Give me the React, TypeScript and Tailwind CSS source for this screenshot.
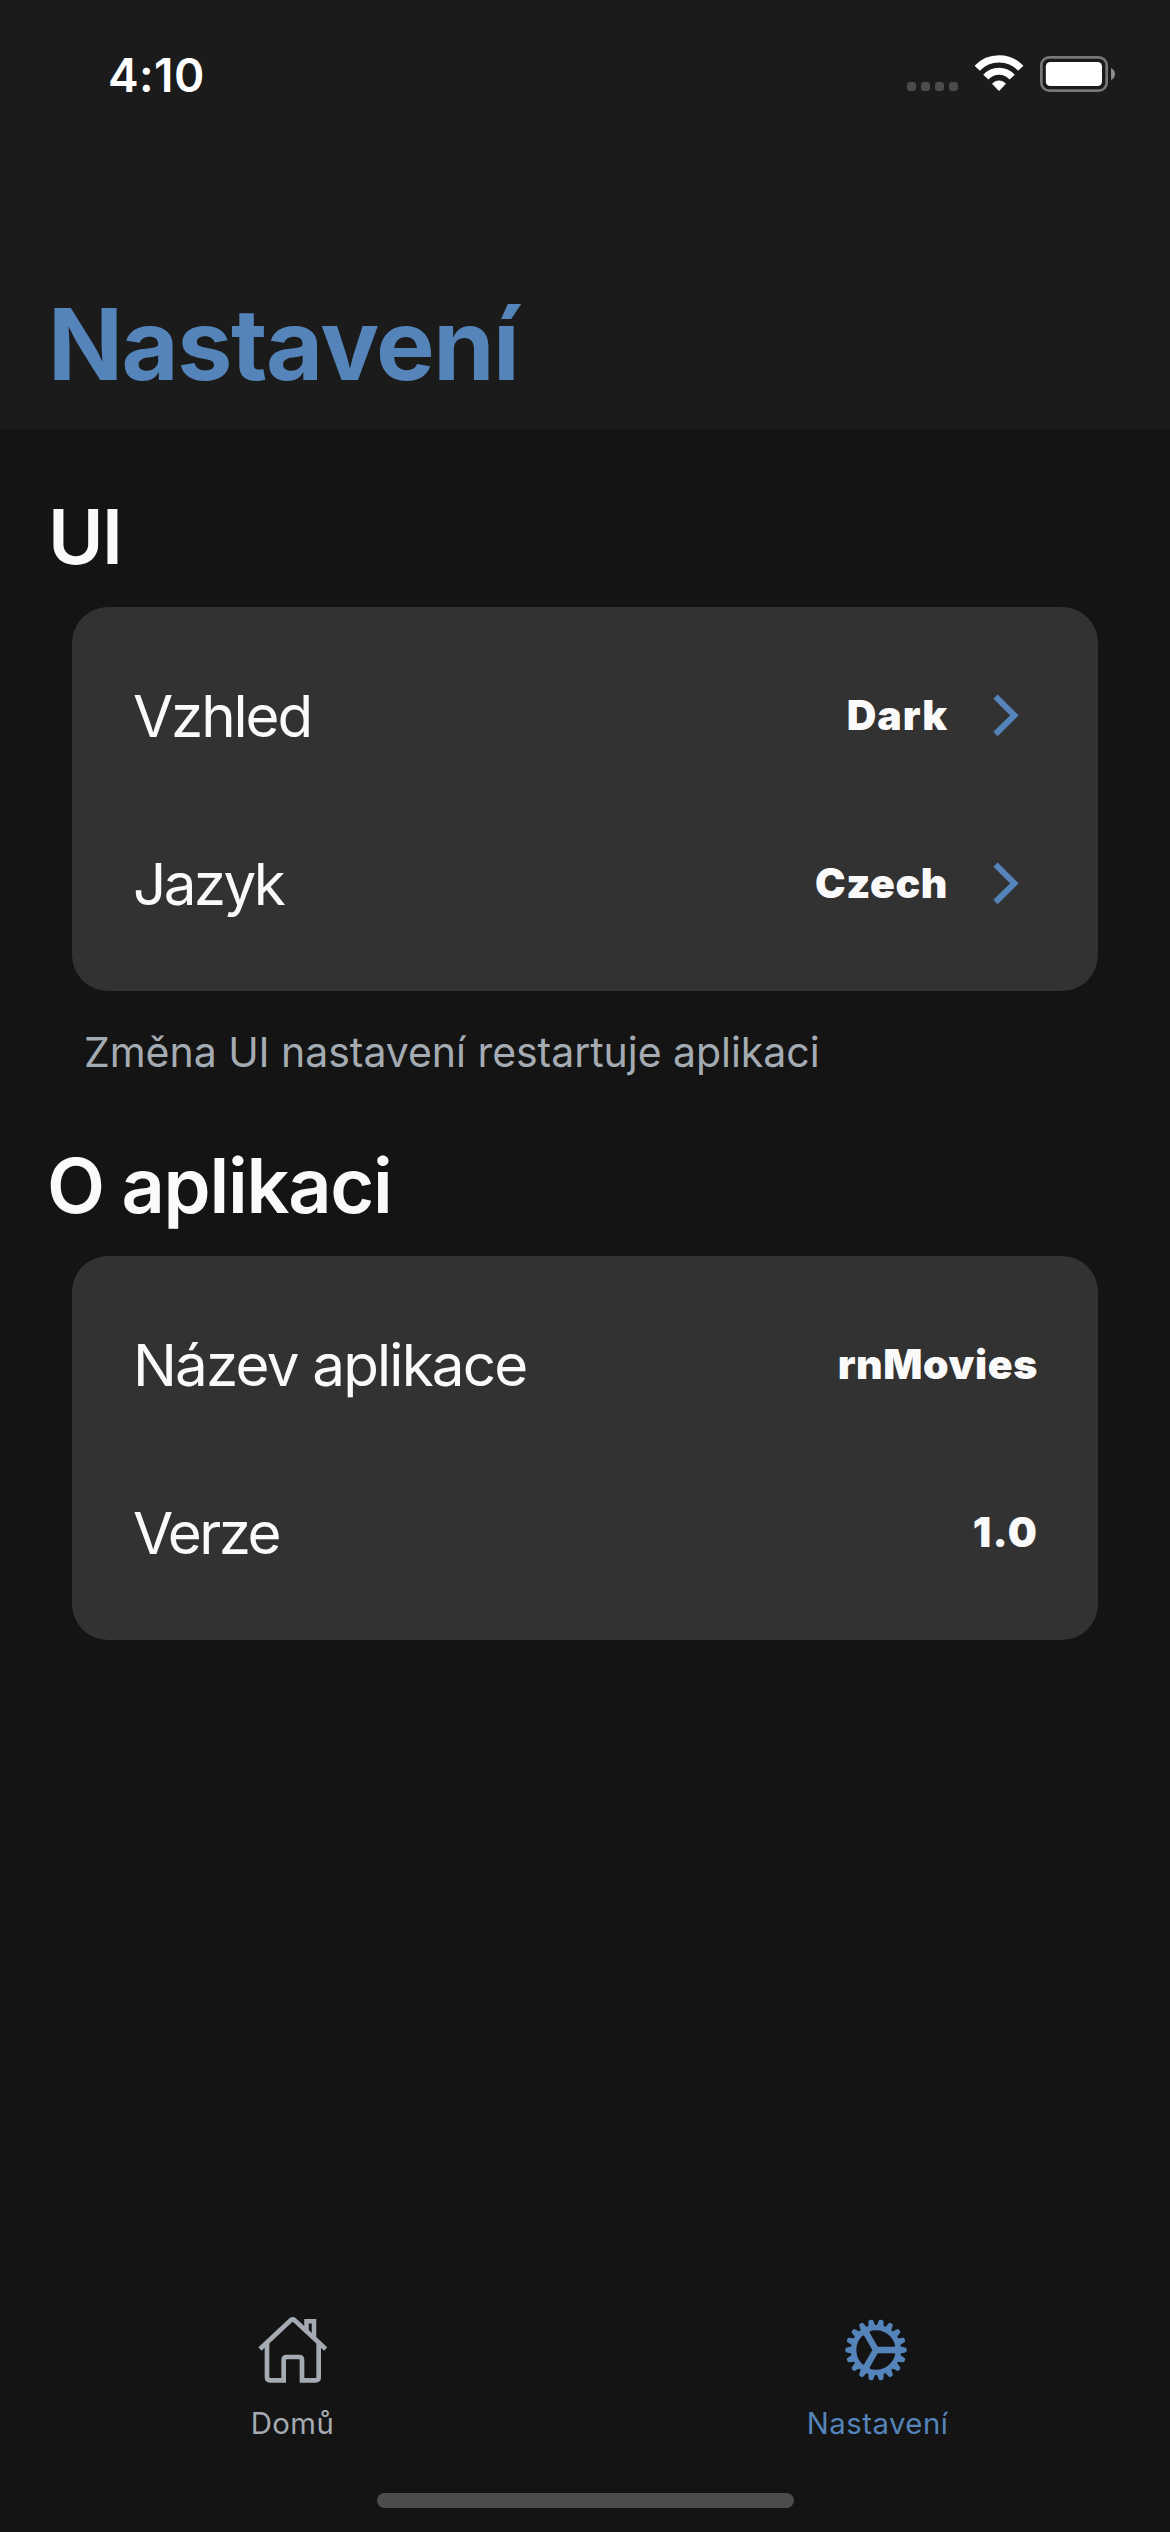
import type { ReactNode } from "react";

function WifiIcon() {
  return (
    <svg className="h-[38px] w-[50px]" viewBox="282 75 150 114" fill="none" stroke="#fff">
      <path d="M291.7 114.5A90 90 0 0 1 422.3 114.5" strokeWidth="22" />
      <path d="M317.5 141.3A53 53 0 0 1 396.5 141.3" strokeWidth="21" />
      <path
        d="M337 161Q345 152.500 357 152.500Q369 152.500 377 161L357 182Z"
        fill="#fff"
        strokeWidth="2"
        strokeLinejoin="round"
      />
    </svg>
  );
}

function BatteryIcon() {
  return (
    <svg className="h-[36px] w-[76px]" viewBox="480 78 228 108" fill="none">
      <rect x="484" y="82" width="196" height="100" rx="24" stroke="#777777" strokeWidth="8" />
      <rect x="497.500" y="96" width="168.500" height="72" rx="13" fill="#fff" />
      <path d="M693 114Q705 120 705 132T693 150Z" fill="#8b8b8b" />
    </svg>
  );
}

function ChevronIcon() {
  return (
    <svg className="h-[44px] w-[26px]" viewBox="639 309 78 132" fill="none" stroke="#5484ba">
      <path d="M646.500 320L703.300 376L646.500 432" strokeWidth="18" />
    </svg>
  );
}

function HomeIcon() {
  return (
    <svg className="h-[70px] w-[72px]" viewBox="110 75 216 210" fill="none" stroke="#a5abb3">
      <path d="M119 177L211 91Q217 86 223 91L316 177" strokeWidth="14" />
      <path
        d="M140 160V262Q140 271 149 271H190V210Q190 201 199 201H236Q245 201 245 210V271H286Q295 271 295 262V160"
        strokeWidth="14"
      />
      <path d="M258.500 124V94H281V146" strokeWidth="13.500" />
    </svg>
  );
}

const TEETH = Array.from({ length: 18 }, (_, i) => i * 20);
const SPOKES = [0, 120, 240];

function GearIcon() {
  return (
    <svg className="mr-[4px] h-[64px] w-[64px]" viewBox="-96 -96 192 192" fill="#5484ba">
      <circle r="67" fill="none" stroke="#5484ba" strokeWidth="16" />
      {TEETH.map((a) => (
        <path
          key={a}
          transform={`rotate(${a})`}
          d="M70 -12L77 -9.500L87 -7.500Q92 -6.500 92 -2V2Q92 6.500 87 7.500L77 9.500L70 12Z"
        />
      ))}
      {SPOKES.map((a) => (
        <path key={a} transform={`rotate(${a})`} d="M0 -9.500H54Q59 -9.500 58 -15L64 -12V12L58 15Q59 9.500 54 9.500H0Z" />
      ))}
    </svg>
  );
}

function Card({ children }: { children: ReactNode }) {
  return <div className="mx-[72px] mt-[25px] rounded-[36px] bg-[#323232] py-6">{children}</div>;
}

function Row({ label, value, link }: { label: ReactNode; value: ReactNode; link?: boolean }) {
  return (
    <div className={`flex h-[168px] items-center justify-between pl-[61px] ${link ? "pr-[79px]" : "pr-[60px]"}`}>
      <div className="pt-[2px] text-[58.3px] leading-[80px]">{label}</div>
      <div className="flex items-center">
        <div className="text-[41px] leading-[50px] font-black">{value}</div>
        {link && (
          <div className="ml-[45px]">
            <ChevronIcon />
          </div>
        )}
      </div>
    </div>
  );
}

export default function App() {
  return (
    <div className="flex h-[2532px] w-[1170px] flex-col overflow-hidden bg-[#141414] font-['Inter',sans-serif] whitespace-nowrap text-[#fafafa]">
      <header className="h-[429px] bg-[#1b1b1b]">
        <div className="flex h-[148px] items-center justify-between pr-[54px] pl-[108px]">
          <div className="pt-px text-[46px] leading-[60px] font-semibold tracking-[0.4px] text-white">4:10</div>
          <div className="flex items-center gap-4">
            <div className="flex gap-[5px] pt-[25px]">
              <i className="size-[9px] rounded-[3px] bg-[#4b4b4b]" />
              <i className="size-[9px] rounded-[3px] bg-[#4b4b4b]" />
              <i className="size-[9px] rounded-[3px] bg-[#4b4b4b]" />
              <i className="size-[9px] rounded-[3px] bg-[#4b4b4b]" />
            </div>
            <WifiIcon />
            <BatteryIcon />
          </div>
        </div>
        <h1 className="mt-[137px] pl-[48px] text-[98.5px] leading-[120px] font-bold tracking-[-1.47px] text-[#5484ba]">
          Nastavení
        </h1>
      </header>

      <main className="flex-1 pt-[62px]">
        <h2 className="pl-[48px] text-[75.5px] leading-[91px] font-semibold tracking-[-1.5px]">UI</h2>
        <Card>
          <Row link label={<span className="tracking-[-2.1px]">Vzhled</span>} value={<span className="tracking-[1px]">Dark</span>} />
          <Row link label={<span className="tracking-[-2.6px]">Jazyk</span>} value={<span className="tracking-[0.6px]">Czech</span>} />
        </Card>
        <p className="mt-[36px] pl-[84px] text-[41px] leading-[50px] tracking-[-0.04px] text-[#a5abb3]">
          Změna UI nastavení restartuje aplikaci
        </p>
        <h2 className="mt-[63px] pl-[47px] text-[75.5px] leading-[91px] font-semibold tracking-[-1.27px]">O aplikaci</h2>
        <Card>
          <Row label={<span className="tracking-[-1.8px]">Název aplikace</span>} value={<span className="tracking-[0.6px]">rnMovies</span>} />
          <Row label={<span className="tracking-[-2.5px]">Verze</span>} value={<span className="tracking-[1.2px]">1.0</span>} />
        </Card>
      </main>

      <nav className="flex flex-col items-center pb-6">
        <div className="grid w-full grid-cols-2 pb-[49px] text-[29.3px] leading-[41px] tracking-[0.5px]">
          <div className="flex flex-col items-center text-[#a5abb3]">
            <div className="flex h-[70px] items-center">
              <HomeIcon />
            </div>
            <span className="mt-[18px]">Domů</span>
          </div>
          <div className="flex flex-col items-center text-[#5484ba]">
            <div className="flex h-[70px] items-center">
              <GearIcon />
            </div>
            <span className="mt-[18px]">Nastavení</span>
          </div>
        </div>
        <div className="h-[15px] w-[417px] rounded-full bg-[#4c4c4c]" />
      </nav>
    </div>
  );
}
